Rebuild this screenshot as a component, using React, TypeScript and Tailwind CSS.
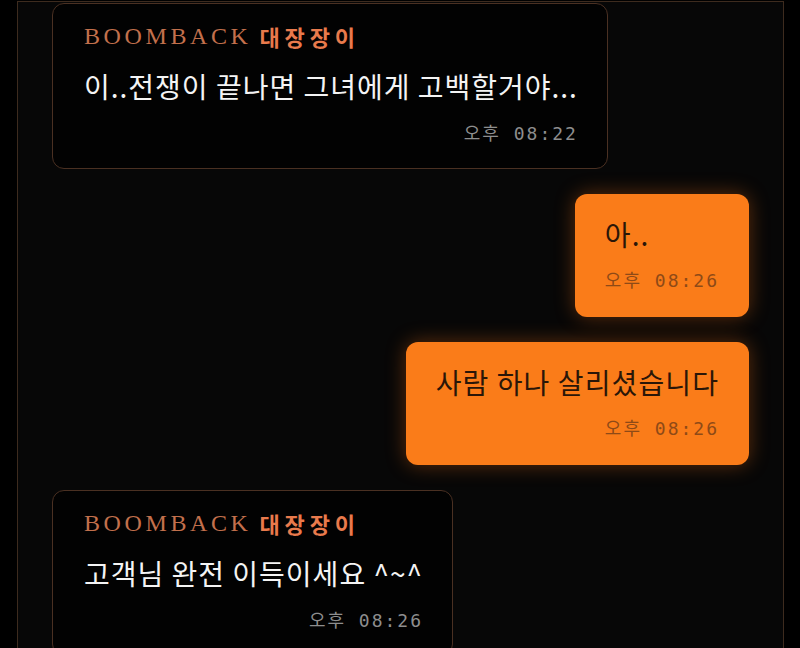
import React from "react";

type Msg = {
  id: number;
  mine: boolean;
  text: string;
  time: string;
};

const messages: Msg[] = [
  { id: 1, mine: false, text: "이..전쟁이 끝나면 그녀에게 고백할거야...", time: "오후 08:22" },
  { id: 2, mine: true, text: "아..", time: "오후 08:26" },
  { id: 3, mine: true, text: "사람 하나 살리셨습니다", time: "오후 08:26" },
  { id: 4, mine: false, text: "고객님 완전 이득이세요 ^~^", time: "오후 08:26" },
];

const sans = "font-['Noto_Sans_CJK_KR','Noto_Sans',sans-serif]";
const mono = "font-['DejaVu_Sans_Mono','Noto_Sans_CJK_KR',monospace]";

function TheirBubble({ msg }: { msg: Msg }) {
  return (
    <div className="self-start flex flex-col rounded-xl border border-[#4a3022] bg-[#020202] pl-[31px] pr-[29px] pt-[18px] pb-[21px]">
      <div className="flex items-center h-[28px] whitespace-nowrap">
        <span className="font-['Liberation_Serif',serif] text-[24px] leading-[28px] tracking-[0.15em] text-[#c2704c]">
          BOOMBACK
        </span>
        <span className={`${sans} ml-[8px] text-[22px] leading-[28px] font-bold tracking-[0.22em] text-[#e97a4c]`}>
          대장장이
        </span>
      </div>
      <p className={`${sans} mt-[18px] text-[28px] leading-[36px] tracking-[1px] text-[#f4f4f4] whitespace-nowrap`}>
        {msg.text}
      </p>
      <span className={`${mono} self-end mt-[17px] text-[18px] leading-[26px] tracking-[2px] text-[#8e8e8e]`}>
        {msg.time}
      </span>
    </div>
  );
}

function MyBubble({ msg }: { msg: Msg }) {
  return (
    <div className="self-end flex flex-col rounded-xl bg-[#fa7c19] px-[30px] pt-[22px] pb-[23px] shadow-[0_0_20px_rgba(240,110,20,0.38)]">
      <p className={`${sans} self-start text-[28px] leading-[36px] tracking-[1.1px] text-[#2a1608] whitespace-nowrap`}>
        {msg.text}
      </p>
      <span className={`${mono} self-end mt-[16px] text-[18px] leading-[26px] tracking-[2px] text-[#8e4a17]`}>
        {msg.time}
      </span>
    </div>
  );
}

export default function App() {
  return (
    <div className="h-[648px] w-[800px] overflow-hidden bg-black">
      <div className="ml-[17px] mt-[1px] w-[767px] h-[700px] border border-[#3d2b1e] bg-[#070707] px-[34px] pt-px">
        <div className="flex flex-col gap-[25px]">
          {messages.map((m) =>
            m.mine ? <MyBubble key={m.id} msg={m} /> : <TheirBubble key={m.id} msg={m} />
          )}
        </div>
      </div>
    </div>
  );
}
